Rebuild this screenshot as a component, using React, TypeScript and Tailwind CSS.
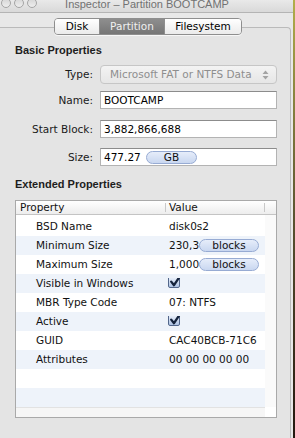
import React from "react";

type Row = { name: string; value?: string; unit?: string; check?: boolean };

const ROWS: Row[] = [
  { name: "BSD Name", value: "disk0s2" },
  { name: "Minimum Size", value: "230,3", unit: "blocks" },
  { name: "Maximum Size", value: "1,000", unit: "blocks" },
  { name: "Visible in Windows", check: true },
  { name: "MBR Type Code", value: "07: NTFS" },
  { name: "Active", check: true },
  { name: "GUID", value: "CAC40BCB-71C6" },
  { name: "Attributes", value: "00 00 00 00 00" },
  { name: "" },
  { name: "" },
];

const TABS = [
  { label: "Disk", w: "w-[44px]" },
  { label: "Partition", w: "w-[65px]", active: true },
  { label: "Filesystem", w: "w-[77px]" },
];

function Pill({ label, className }: { label: string; className: string }) {
  return (
    <div
      className={`flex h-[13px] shrink-0 items-center justify-center rounded-full border border-[#97abd3] bg-gradient-to-b from-[#e6edfa] to-[#c9d7f0] text-[#111] ${className}`}
    >
      {label}
    </div>
  );
}

function Check() {
  return (
    <div className="relative h-[12px] w-[12px] rounded-[2px] border border-[#52668a] bg-gradient-to-b from-[#eef3fb] to-[#aec3e4]">
      <svg
        className="absolute -left-[1px] -top-[4px]"
        width="15"
        height="15"
        viewBox="0 0 15 15"
      >
        <path
          d="M3.2 8.6 L6 12.2 L12.6 2.2"
          fill="none"
          stroke="#15233c"
          strokeWidth="2.3"
          strokeLinecap="round"
          strokeLinejoin="round"
        />
      </svg>
    </div>
  );
}

function Field({ label, children, popup }: { label: string; children: React.ReactNode; popup?: boolean }) {
  return (
    <div className="flex items-center">
      <div className="w-[93px] text-right text-[#1a1a1a]">{label}</div>
      {popup ? (
        <div className="ml-[7px] flex h-[19px] w-[177px] items-center rounded-[4px] border border-[#c6c6c6] bg-gradient-to-b from-[#f3f3f3] to-[#e6e6e6] pl-[9px] text-[#8e8e8e]">
          {children}
        </div>
      ) : (
        <div className="ml-[7px] flex h-[18px] w-[177px] items-center border border-[#b3b3b3] border-t-[#8c8c8c] bg-white pl-[3px] text-black">
          {children}
        </div>
      )}
    </div>
  );
}

export default function App() {
  return (
    <div className="flex h-[438px] w-[295px] overflow-hidden bg-[#e8e8e8] font-['Lucida_Grande','DejaVu_Sans',sans-serif] text-[10.5px] leading-[13px]">
      <div className="flex w-[293px] flex-col">
        {/* title bar, cut off at the top of the shot */}
        <div className="relative flex h-[13px] shrink-0 items-start border-b border-[#b4b4b4] bg-gradient-to-b from-[#e9e9e9] to-[#d9d9d9]">
          <div className="-mt-[2px] ml-[1px] flex gap-[3px]">
            <div className="h-[10px] w-[10px] rounded-full border border-[#a5a5a5] bg-gradient-to-b from-[#d6d6d6] to-[#eeeeee]" />
            <div className="h-[10px] w-[10px] rounded-full border border-[#a5a5a5] bg-gradient-to-b from-[#d6d6d6] to-[#eeeeee]" />
            <div className="h-[10px] w-[10px] rounded-full border border-[#a5a5a5] bg-gradient-to-b from-[#d6d6d6] to-[#eeeeee]" />
          </div>
          <div className="-mt-[2px] flex-1 pr-[36px] text-center font-['Liberation_Sans',sans-serif] text-[11px] text-[#727272]">
            Inspector – Partition BOOTCAMP
          </div>
        </div>

        {/* tabs */}
        <div className="relative z-10 flex pl-[54px] pt-[5px]">
          <div className="flex h-[17px] overflow-hidden rounded-[4px] border border-[#8e8e8e] shadow-[0_1px_0_rgba(255,255,255,0.7)]">
            {TABS.map((t, i) => (
              <div
                key={t.label}
                className={`flex items-center justify-center ${t.w} ${i > 0 ? "border-l border-[#8e8e8e]" : ""} ${
                  t.active
                    ? "bg-gradient-to-b from-[#8e8e8e] to-[#767676] text-[#f0f0f0]"
                    : "bg-gradient-to-b from-[#ffffff] to-[#ebebeb] text-black"
                }`}
              >
                {t.label}
              </div>
            ))}
          </div>
        </div>

        {/* panel */}
        <div className="-mt-[8px] mr-[2px] flex flex-1 flex-col rounded-tr-[4px] border-r border-t border-[#bababa] bg-[#e4e4e4]">
          <div className="mt-[16px] pl-[15px] font-['Liberation_Sans',sans-serif] text-[11px] font-bold text-[#1d1d1d]">
            Basic Properties
          </div>

          <div className="mt-[8px]">
            <Field label="Type:" popup>
              <span>Microsoft FAT or NTFS Data</span>
              <svg className="ml-auto mr-[7px]" width="7" height="10" viewBox="0 0 7 10">
                <path d="M3.5 0.5 L6.5 4 H0.5Z M0.5 6 H6.5 L3.5 9.5Z" fill="#a3a3a3" />
              </svg>
            </Field>
          </div>
          <div className="mt-[7px]">
            <Field label="Name:">BOOTCAMP</Field>
          </div>
          <div className="mt-[11px]">
            <Field label="Start Block:">3,882,866,688</Field>
          </div>
          <div className="mt-[10px]">
            <Field label="Size:">
              <span className="w-[42px] shrink-0">477.27</span>
              <Pill label="GB" className="w-[51px]" />
            </Field>
          </div>

          <div className="mt-[12px] pl-[15px] font-['Liberation_Sans',sans-serif] text-[11px] font-bold text-[#1d1d1d]">
            Extended Properties
          </div>

          {/* table */}
          <div className="ml-[15px] mt-[9px] w-[262px] border border-[#a9a9a9] bg-white text-[#111]">
            <div className="flex h-[14px] border-b border-[#c4c4c4] bg-gradient-to-b from-[#ffffff] to-[#ededed]">
              <div className="flex w-[150px] items-center justify-between pl-[4px]">
                <span>Property</span>
                <span className="h-[9px] w-px bg-[#c8c8c8]" />
              </div>
              <div className="flex w-[99px] items-center justify-between pl-[3px]">
                <span>Value</span>
                <span className="h-[9px] w-px bg-[#c8c8c8]" />
              </div>
              <div className="flex-1" />
            </div>

            <div className="flex">
              <div className="w-[249px] pt-[2px]">
                {ROWS.map((r, i) => (
                  <div
                    key={i}
                    className={`flex h-[19px] items-center pb-px ${i % 2 === 1 ? "bg-[#eef3fa]" : "bg-white"}`}
                  >
                    <div className="w-[150px] pl-[20px]">{r.name}</div>
                    <div className="flex w-[99px] items-center overflow-hidden whitespace-nowrap pl-[3px]">
                      {r.check ? (
                        <div className="-ml-[1px] -mt-[2px]">
                          <Check />
                        </div>
                      ) : r.unit ? (
                        <>
                          <span className="w-[30px] shrink-0">{r.value}</span>
                          <Pill label={r.unit} className="w-[60px]" />
                        </>
                      ) : (
                        <span>{r.value}</span>
                      )}
                    </div>
                  </div>
                ))}
              </div>
              <div className="w-[11px] bg-[#fafafa]" />
            </div>

            <div className="flex h-[10px]">
              <div className="w-[249px] border-t border-[#e2e2e2] bg-[#f6f6f6]" />
              <div className="flex-1 bg-white" />
            </div>
          </div>
        </div>
      </div>

      {/* desktop showing past the window edge */}
      <div className="w-[2px] bg-gradient-to-b from-[#b2ae4a] via-[#5a5230] to-[#24180f]" />
    </div>
  );
}
